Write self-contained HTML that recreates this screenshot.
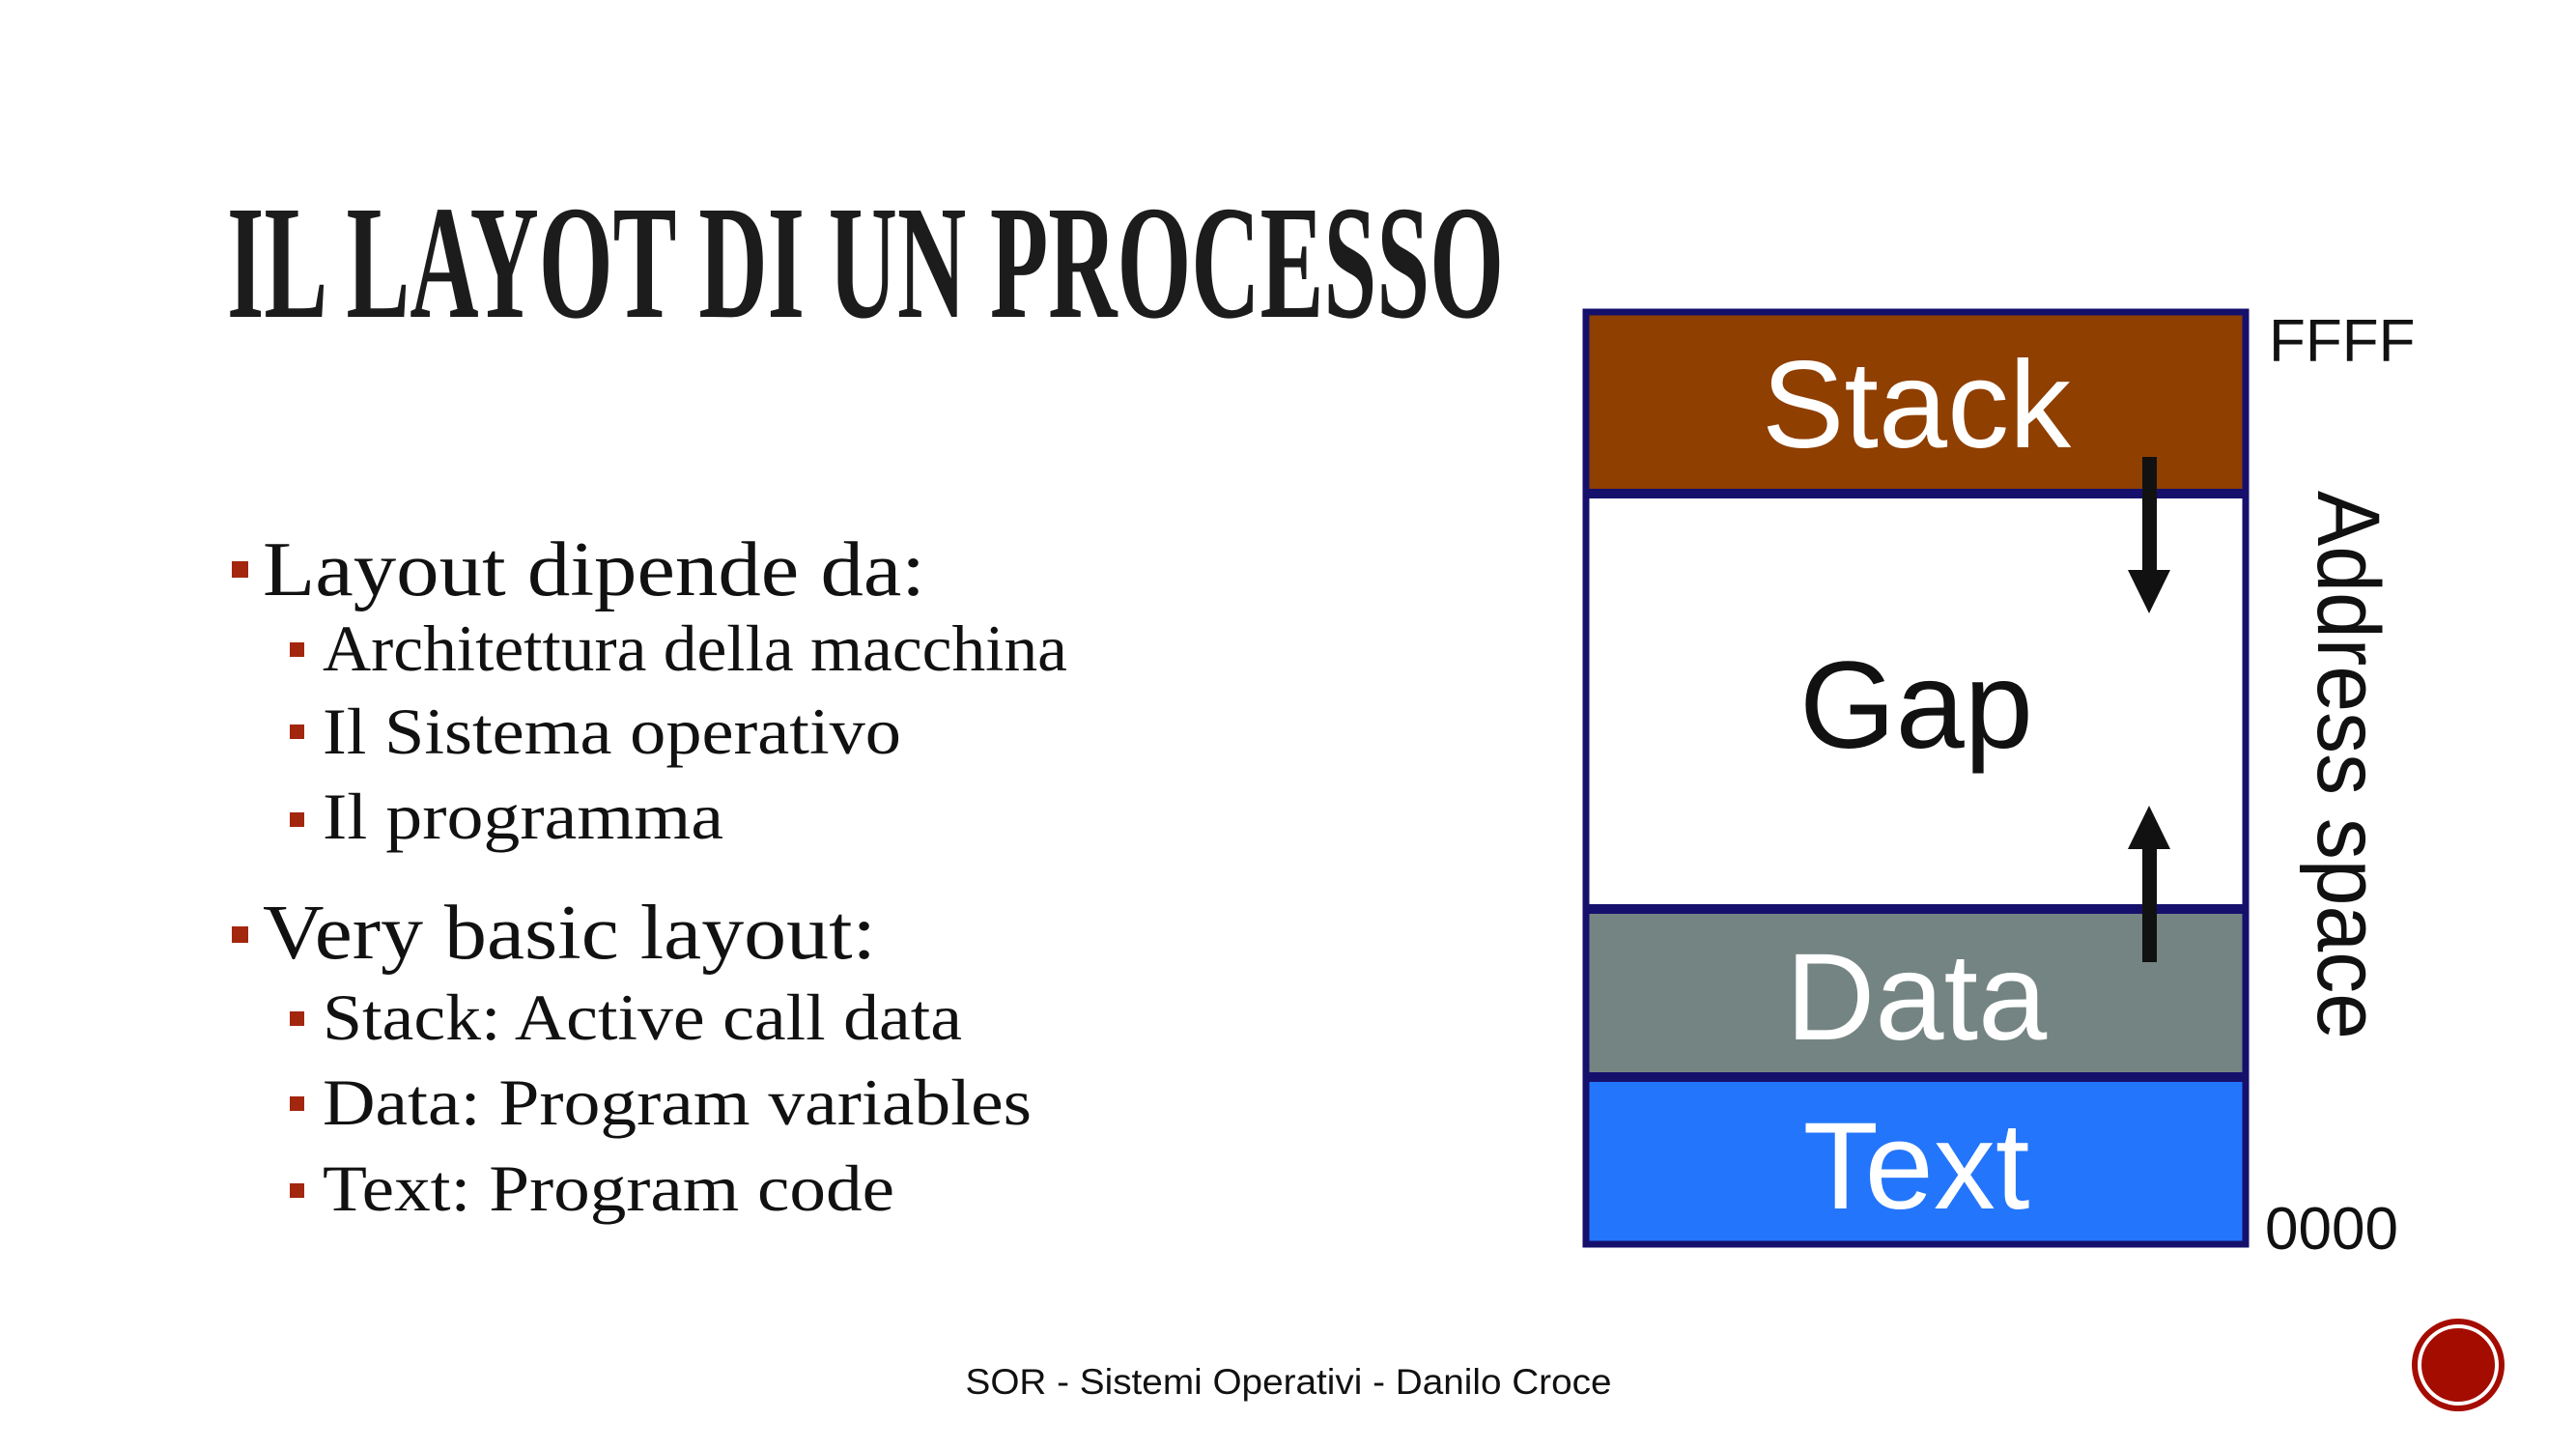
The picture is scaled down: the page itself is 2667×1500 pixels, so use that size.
<!DOCTYPE html>
<html><head><meta charset="utf-8"><style>html,body{margin:0;padding:0;background:#fff}svg{display:block}</style></head>
<body>
<svg width="2667" height="1500" viewBox="0 0 2667 1500" xmlns="http://www.w3.org/2000/svg">
<rect width="2667" height="1500" fill="#fff"/>
<text x="235" y="328" font-family="Liberation Serif, serif" font-weight="bold" font-size="168" fill="#1c1c1c" textLength="1322" lengthAdjust="spacingAndGlyphs">IL LAYOT DI UN PROCESSO</text>

<g fill="#a3260f">
<rect x="240" y="581" width="17" height="17"/>
<rect x="300" y="665" width="15" height="15"/>
<rect x="300" y="750" width="15" height="15"/>
<rect x="300" y="841" width="15" height="15"/>
<rect x="240" y="959" width="17" height="17"/>
<rect x="300" y="1047" width="15" height="15"/>
<rect x="300" y="1135" width="15" height="15"/>
<rect x="300" y="1225" width="15" height="15"/>
</g>
<g font-family="Liberation Serif, serif" fill="#111">
<text x="272" y="616" font-size="80" textLength="686" lengthAdjust="spacingAndGlyphs">Layout dipende da:</text>
<text x="334" y="694" font-size="68" textLength="771" lengthAdjust="spacingAndGlyphs">Architettura della macchina</text>
<text x="334" y="780" font-size="68" textLength="599" lengthAdjust="spacingAndGlyphs">Il Sistema operativo</text>
<text x="334" y="868" font-size="68" textLength="415" lengthAdjust="spacingAndGlyphs">Il programma</text>
<text x="272" y="992" font-size="80" textLength="635" lengthAdjust="spacingAndGlyphs">Very basic layout:</text>
<text x="334" y="1076" font-size="68" textLength="662" lengthAdjust="spacingAndGlyphs">Stack: Active call data</text>
<text x="334" y="1164" font-size="68" textLength="734" lengthAdjust="spacingAndGlyphs">Data: Program variables</text>
<text x="334" y="1253" font-size="68" textLength="592" lengthAdjust="spacingAndGlyphs">Text: Program code</text>
</g>

<rect x="1642" y="323" width="683" height="188" fill="#8f3f00"/>
<rect x="1642" y="511" width="683" height="430" fill="#fff"/>
<rect x="1642" y="941" width="683" height="174" fill="#748482"/>
<rect x="1642" y="1115" width="683" height="173" fill="#2375fb"/>
<g stroke="#15106c" stroke-width="7" fill="none">
<rect x="1642" y="323" width="683" height="965"/>
<line x1="1642" y1="511" x2="2325" y2="511" stroke-width="10"/>
<line x1="1642" y1="941" x2="2325" y2="941" stroke-width="10"/>
<line x1="1642" y1="1115" x2="2325" y2="1115" stroke-width="10"/>
</g>
<g font-family="Liberation Sans, sans-serif" font-size="128" text-anchor="middle">
<text x="1984" y="463" fill="#fff">Stack</text>
<text x="1984" y="774" fill="#111">Gap</text>
<text x="1984" y="1076" fill="#fff">Data</text>
<text x="1984" y="1251" fill="#fff">Text</text>
</g>
<g fill="#111">
<rect x="2218" y="473" width="15" height="120"/>
<polygon points="2203,590 2247,590 2225,635"/>
<rect x="2218" y="875" width="15" height="121"/>
<polygon points="2203,879 2247,879 2225,834"/>
</g>
<g font-family="Liberation Sans, sans-serif" fill="#111">
<text x="2349" y="374" font-size="62">FFFF</text>
<text x="2345" y="1293" font-size="62">0000</text>
<text transform="translate(2400,508) rotate(90)" font-size="92" textLength="568" lengthAdjust="spacingAndGlyphs">Address space</text>
</g>

<text x="1334" y="1443" font-family="Liberation Sans, sans-serif" font-size="37" text-anchor="middle" fill="#111" textLength="669" lengthAdjust="spacingAndGlyphs">SOR - Sistemi Operativi - Danilo Croce</text>

<circle cx="2545" cy="1413" r="48" fill="#a50c00"/>
<circle cx="2545" cy="1413" r="40" fill="none" stroke="#fff" stroke-width="4"/>
</svg>
</body></html>
